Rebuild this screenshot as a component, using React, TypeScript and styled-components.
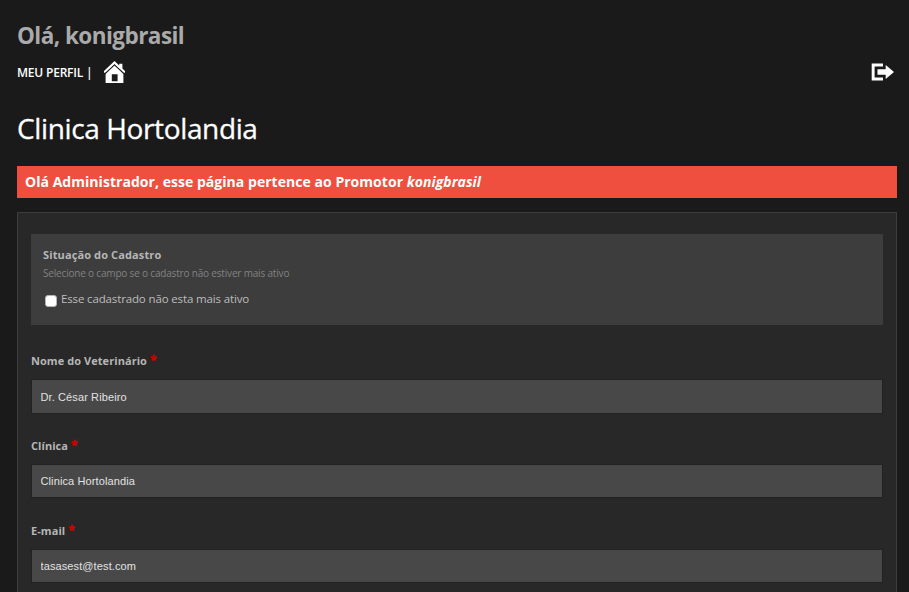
import React from "react";
import styled, { createGlobalStyle } from "styled-components";

const GlobalStyle = createGlobalStyle`
  * { box-sizing: border-box; }
  body {
    margin: 0;
    height: 592px;
    overflow: hidden;
    background: #1a1a1a;
    font-family: "Open Sans", sans-serif;
  }
`;

const Page = styled.main`
  display: flex;
  flex-direction: column;
  height: 592px;
  overflow: hidden;
  padding: 20px 12px 0 17px;
`;

const Greeting = styled.h2`
  margin: 0;
  height: 32px;
  line-height: 32px;
  font-size: 22.5px;
  font-weight: 700;
  letter-spacing: -0.54px;
  color: #aaa;
`;

const Toolbar = styled.nav`
  display: flex;
  align-items: center;
  height: 22px;
  margin-top: 9px;
  padding-right: 2px;
  color: #fff;
`;

const ProfileLink = styled.a`
  width: 87px;
  padding-top: 2px;
  font-size: 12px;
  font-weight: 600;
  line-height: 20px;
  letter-spacing: -0.2px;
  white-space: nowrap;
`;

const LogoutButton = styled.a`
  display: flex;
  margin-left: auto;
`;

const Title = styled.h1`
  margin: 24px 0 0;
  height: 42px;
  line-height: 42px;
  font-size: 28px;
  font-weight: 400;
  letter-spacing: -0.37px;
  -webkit-text-stroke: 0.3px #fff;
  color: #fff;
`;

const Notice = styled.div`
  flex: none;
  height: 32px;
  margin-top: 17px;
  padding-left: 8px;
  line-height: 32px;
  font-size: 14px;
  font-weight: 700;
  letter-spacing: 0.04px;
  color: #fff;
  background: #ee4f3f;
`;

const FormPanel = styled.form`
  flex: none;
  height: 430px;
  margin-top: 14px;
  padding: 21px 13px 0;
  border: 1px solid #3c3c3c;
  background: #282828;
`;

const StatusBox = styled.fieldset`
  display: flex;
  flex-direction: column;
  height: 91px;
  margin: 0 0 26px;
  padding: 12px 12px 0;
  border: 0;
  background: #3d3d3d;
`;

const StatusTitle = styled.strong`
  line-height: 18px;
  font-size: 11px;
  font-weight: 700;
  letter-spacing: 0.12px;
  color: #b6b6b6;
`;

const Hint = styled.span`
  line-height: 18px;
  font-size: 10px;
  letter-spacing: -0.18px;
  color: #828282;
`;

const CheckLabel = styled.label`
  display: flex;
  align-items: center;
  gap: 4px;
  height: 20px;
  margin-top: 6px;
  padding-left: 2px;
  font-size: 11.5px;
  letter-spacing: -0.14px;
  color: #bcbcbc;
`;

const Checkbox = styled.input`
  appearance: none;
  width: 12px;
  height: 12px;
  margin: 5px 0 0;
  border: 1px solid #b5b5b5;
  border-radius: 3px;
  background: #fff;
`;

const Field = styled.div`
  display: flex;
  flex-direction: column;
  height: 85px;
`;

const FieldLabel = styled.label`
  height: 28px;
  line-height: 20px;
  font-size: 11px;
  font-weight: 700;
  letter-spacing: 0.06px;
  color: #b6b6b6;
`;

const Required = styled.span`
  font-size: 12px;
  line-height: 1;
  color: #d00000;
  -webkit-text-stroke: 0.5px #d00000;
`;

const TextInput = styled.input<{ $height: number }>`
  width: 100%;
  height: ${({ $height }) => $height}px;
  padding: 0 8.5px;
  border: 1px solid #222;
  border-radius: 0;
  outline: none;
  background: #484848;
  color: #e2e2e2;
  font: 11px "Liberation Sans", Arial, sans-serif;
  letter-spacing: 0.11px;
`;

const HomeIcon = () => (
  <svg width="21" height="22" viewBox="0 0 21 22" fill="#fff">
    <path d="M0 10 10.5 0l4.7 4.4V2.8h3.2v4.7L21 10v1.8h-1.5L10.5 3.2 1.5 11.8H0z" />
    <path
      d="M1.6 22V13L10.5 4.6 19.4 13v9zM7.8 13.3v6.9h5.8v-6.9z"
      fillRule="evenodd"
    />
    <path d="M1 12.5 10.5 3.8l9.5 8.7" fill="none" stroke="#1a1a1a" strokeWidth="1" />
  </svg>
);

const LogoutIcon = () => (
  <svg width="24" height="18" viewBox="0 0 24 18" fill="#fff">
    <path d="M.7.6H12v2.8H3.6v11.2H12v2.8H.7z" />
    <path d="M6.5 6.2h8.2V1.9L23 9l-8.3 7.1v-4.3H6.5z" />
  </svg>
);

const fields = [
  { id: "vet", label: "Nome do Veterinário", value: "Dr. César Ribeiro", height: 35 },
  { id: "clinic", label: "Clínica", value: "Clinica Hortolandia", height: 34 },
  { id: "email", label: "E-mail", value: "tasasest@test.com", height: 34 },
];

export default function App() {
  return (
    <>
      <GlobalStyle />
      <Page>
        <Greeting>Olá, konigbrasil</Greeting>
        <Toolbar>
          <ProfileLink>MEU PERFIL |</ProfileLink>
          <HomeIcon />
          <LogoutButton>
            <LogoutIcon />
          </LogoutButton>
        </Toolbar>
        <Title>Clinica Hortolandia</Title>
        <Notice>
          Olá Administrador, esse página pertence ao Promotor <em>konigbrasil</em>
        </Notice>
        <FormPanel>
          <StatusBox>
            <StatusTitle>Situação do Cadastro</StatusTitle>
            <Hint>Selecione o campo se o cadastro não estiver mais ativo</Hint>
            <CheckLabel>
              <Checkbox type="checkbox" />
              Esse cadastrado não esta mais ativo
            </CheckLabel>
          </StatusBox>
          {fields.map((field) => (
            <Field key={field.id}>
              <FieldLabel htmlFor={field.id}>
                {field.label} <Required>*</Required>
              </FieldLabel>
              <TextInput id={field.id} defaultValue={field.value} $height={field.height} />
            </Field>
          ))}
        </FormPanel>
      </Page>
    </>
  );
}
